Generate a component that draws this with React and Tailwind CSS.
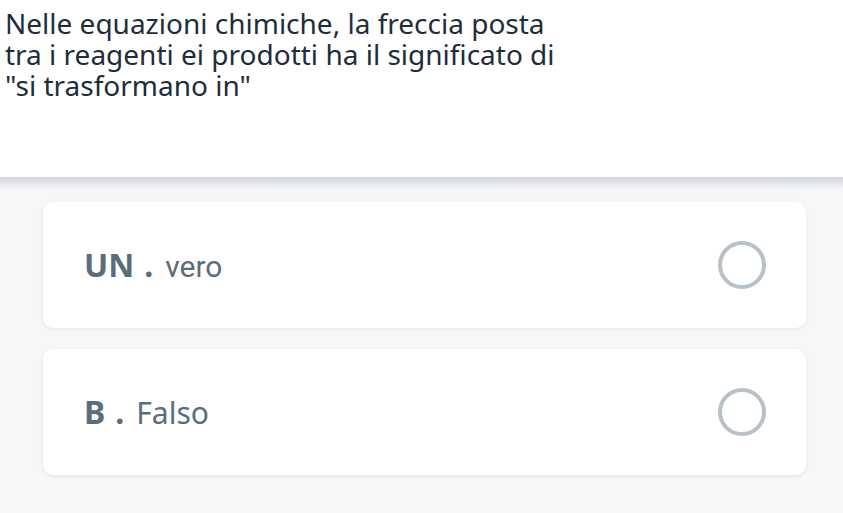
import React from 'react'

const OPTIONS = [
  { key: 'UN', text: 'vero', textFont: "font-['Roboto',sans-serif] text-[30px]" },
  { key: 'B', text: 'Falso', textFont: "font-['Noto_Sans',sans-serif] text-[30px]" },
]

const QUESTION_LINES = [
  'Nelle equazioni chimiche, la freccia posta',
  'tra i reagenti ei prodotti ha il significato di',
  '"si trasformano in"',
]

function Radio() {
  return <span className="block w-12 h-12 rounded-full border-4 border-[#b9c1c8] bg-white" />
}

function OptionCard({ option }) {
  return (
    <div className="flex items-center justify-between h-[126px] pl-[41px] pr-[40px] rounded-[10px] bg-white shadow-[0_1px_4px_rgba(0,0,0,0.08)]">
      <div className="flex items-baseline text-[32px] text-[#5b6c7b]">
        <span className="font-bold font-['Noto_Sans',sans-serif]">{option.key}</span>
        <span className="font-bold font-['Noto_Sans',sans-serif] ml-[10px] mr-[12px]">.</span>
        <span className={option.textFont}>{option.text}</span>
      </div>
      <Radio />
    </div>
  )
}

export default function App() {
  return (
    <div className="w-[843px] h-[513px] overflow-hidden bg-[#f6f7f9] font-['Noto_Sans',sans-serif]">
      <div className="h-[177px] bg-white px-[5px] pt-[8px]">
        {QUESTION_LINES.map((line) => (
          <div key={line} className="h-[31px] text-[28px] leading-[31px] text-[#1e2d3c] whitespace-nowrap">
            {line}
          </div>
        ))}
      </div>
      <div className="h-[13px] bg-gradient-to-b from-[#d3d6da] to-[#f6f7f9]" />
      <div className="pl-[43px] pr-[37px] pt-[12px] flex flex-col gap-[21px]">
        {OPTIONS.map((o) => (
          <OptionCard key={o.key} option={o} />
        ))}
      </div>
    </div>
  )
}
